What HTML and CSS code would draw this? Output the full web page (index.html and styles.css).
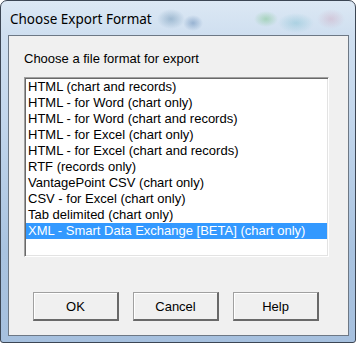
FILE: index.html
```html
<!DOCTYPE html>
<html>
<head>
    <title>Choose Export Format</title>
    <link rel="stylesheet" href="styles.css">
</head>
<body>
    <div class="window">
        <div class="titlebar">
            <span class="title">Choose Export Format</span>
        </div>

        <div class="client">
            <div class="prompt">Choose a file format for export</div>

            <!-- список форматов -->
            <div class="listbox">
                <div class="item">HTML (chart and records)</div>
                <div class="item">HTML - for Word (chart only)</div>
                <div class="item">HTML - for Word (chart and records)</div>
                <div class="item">HTML - for Excel (chart only)</div>
                <div class="item">HTML - for Excel (chart and records)</div>
                <div class="item">RTF (records only)</div>
                <div class="item">VantagePoint CSV (chart only)</div>
                <div class="item">CSV - for Excel (chart only)</div>
                <div class="item">Tab delimited (chart only)</div>
                <div class="item selected">XML - Smart Data Exchange [BETA] (chart only)</div>
            </div>

            <div class="buttons">
                <button class="btn">OK</button>
                <button class="btn">Cancel</button>
                <button class="btn">Help</button>
            </div>
        </div>
    </div>
</body>
</html>
```

FILE: styles.css
```css
body {
    margin: 0;
    padding: 0;
    background: #ffffff;
    font-family: "Liberation Sans", Arial, sans-serif;
}

.window {
    width: 356px;
    height: 343px;
    box-sizing: border-box;
    border: 1px solid #3c4654;
    border-radius: 7px 7px 3px 3px;
    padding: 0 6px 6px 7px;
    display: flex;
    flex-direction: column;
    background:
        radial-gradient(ellipse 14px 10px at 170px 18px, rgba(60, 110, 150, 0.35), transparent),
        radial-gradient(ellipse 10px 8px at 192px 22px, rgba(40, 90, 150, 0.35), transparent),
        radial-gradient(ellipse 12px 8px at 265px 18px, rgba(80, 180, 90, 0.35), transparent),
        radial-gradient(ellipse 18px 10px at 295px 22px, rgba(80, 170, 190, 0.3), transparent),
        radial-gradient(ellipse 14px 10px at 330px 18px, rgba(200, 120, 150, 0.25), transparent),
        linear-gradient(to bottom, #dce8f4 0px, #cfdff0 34px, #c2d6ec 120px, #a9c3e0 250px, #a6c0de 343px);
}

.titlebar {
    height: 34px;
    display: flex;
    align-items: center;
    padding-left: 2px;
}

.title {
    font-family: "Noto Sans", "Open Sans", sans-serif;
    font-size: 13.5px;
    color: #000000;
    margin-top: 2px;
}

.client {
    flex: 1;
    background: #f0f0f0;
    border: 1px solid #6d7885;
    padding: 0 19px 0 15px;
}

.prompt {
    font-size: 13px;
    margin-top: 15px;
    height: 26px;
}

.listbox {
    width: 305px;
    height: 180px;
    box-sizing: border-box;
    background: #ffffff;
    border-top: 1px solid #a0a0a0;
    border-left: 1px solid #a0a0a0;
    border-right: 1px solid #ffffff;
    border-bottom: 1px solid #ffffff;
    box-shadow: inset 1px 1px 0 #696969, inset -1px -1px 0 #e3e3e3;
    padding: 1px;
}

.item {
    height: 16px;
    line-height: 16px;
    font-size: 13px;
    padding-left: 2px;
    white-space: nowrap;
    color: #000000;
}

.selected {
    background: #3399ff;
    color: #ffffff;
}

.buttons {
    display: flex;
    gap: 14px;
    margin-top: 35px;
    padding-left: 9px;
}

.btn {
    width: 86px;
    height: 29px;
    font-family: "Liberation Sans", Arial, sans-serif;
    font-size: 13px;
    background: #f0f0f0;
    border-style: solid;
    border-width: 1px 2px 2px 1px;
    border-color: #a0a0a0 #696969 #696969 #a0a0a0;
    box-shadow: inset 1px 1px 0 #ffffff;
    padding: 0;
    color: #000000;
}
```
